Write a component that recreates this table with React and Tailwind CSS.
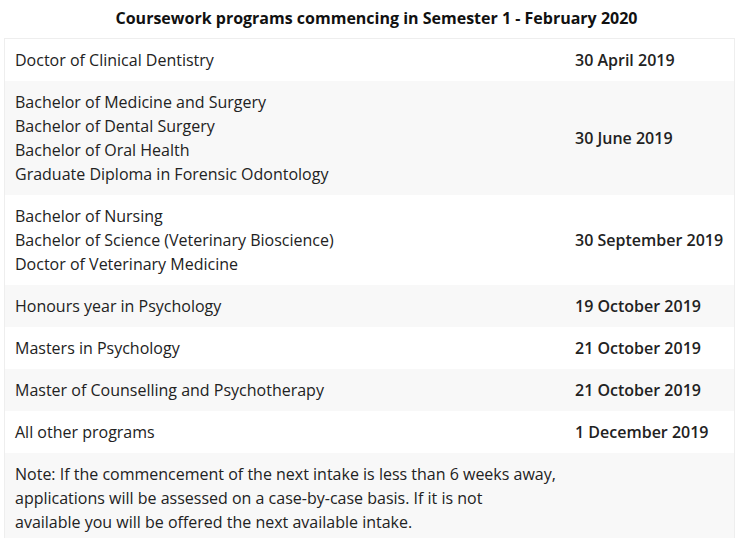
import React from "react";

const rows = [
  { names: ["Doctor of Clinical Dentistry"], date: "30 April 2019" },
  {
    names: [
      "Bachelor of Medicine and Surgery",
      "Bachelor of Dental Surgery",
      "Bachelor of Oral Health",
      "Graduate Diploma in Forensic Odontology",
    ],
    date: "30 June 2019",
  },
  {
    names: [
      "Bachelor of Nursing",
      "Bachelor of Science (Veterinary Bioscience)",
      "Doctor of Veterinary Medicine",
    ],
    date: "30 September 2019",
  },
  { names: ["Honours year in Psychology"], date: "19 October 2019" },
  { names: ["Masters in Psychology"], date: "21 October 2019" },
  { names: ["Master of Counselling and Psychotherapy"], date: "21 October 2019" },
  { names: ["All other programs"], date: "1 December 2019" },
];

const App = () => {
  return (
    <div
      className="w-[753px] h-[538px] overflow-hidden bg-white text-[#222]"
      style={{ fontFamily: '"Open Sans", "Noto Sans", sans-serif' }}
    >
      <h2 className="h-[38px] flex items-center justify-center text-[16px] font-bold text-[#111] pb-[3px]">
        Coursework programs commencing in Semester 1 - February 2020
      </h2>

      <div className="ml-[4px] w-[731px] border border-[#eeeeee]">
        {rows.map((row, i) => (
          <div
            key={i}
            className={`flex items-center py-[9px] text-[16px] leading-6 ${
              i % 2 === 1 ? "bg-[#f8f8f8]" : "bg-white"
            }`}
          >
            <div className="w-[560px] pl-[10px]">
              {row.names.map((n) => (
                <div key={n}>{n}</div>
              ))}
            </div>
            <div className="flex-1 pl-[10px] font-semibold">{row.date}</div>
          </div>
        ))}
        <div className="bg-[#f8f8f8] py-[9px] pl-[10px] text-[16px] leading-6">
          <p>
            Note: If the commencement of the next intake is less than 6 weeks away,
            <br />
            applications will be assessed on a case-by-case basis. If it is not
            <br />
            available you will be offered the next available intake.
          </p>
        </div>
      </div>
    </div>
  );
};

export default App;
